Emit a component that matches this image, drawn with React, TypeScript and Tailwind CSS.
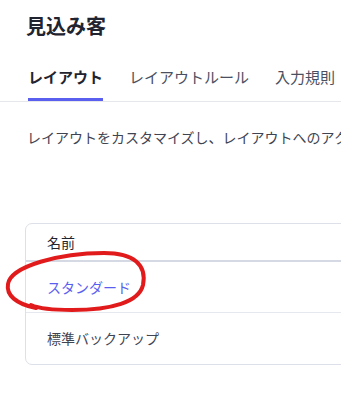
import React from 'react';

const font = { fontFamily: '"Noto Sans CJK JP", "Noto Sans", sans-serif' };

const tabs = ['レイアウト', 'レイアウトルール', '入力規則'];

export default function App() {
  return (
    <div className="relative w-[341px] h-[394px] overflow-hidden bg-white text-gray-800" style={font}>
      <h1 className="pl-[26px] pt-[11px] text-[20px] leading-[30px] font-bold text-[#1f2430]">見込み客</h1>

      <div className="mt-[22px] flex gap-[26px] pl-[28px] border-b border-[#e5e7eb] whitespace-nowrap">
        {tabs.map((t, i) => (
          <div
            key={t}
            className={`pb-[7px] text-[15px] leading-[28px] border-b-[3px] ${
              i === 0 ? 'font-bold text-[#1f2430] border-[#5a5ff0]' : 'text-[#4b5060] border-transparent'
            }`}
          >
            {t}
          </div>
        ))}
      </div>

      <p className="mt-[25px] pl-[27px] text-[14px] leading-[20px] text-[#3f4452] whitespace-nowrap">
        レイアウトをカスタマイズし、レイアウトへのアクセス権を設定します。
      </p>

      <div className="mt-[76px] ml-[25px] w-[420px] rounded-[7px] border border-[#dde0e8] text-[14px]">
        <div className="h-[38px] flex items-center pl-[21px] border-b-2 border-[#d5d9e4] text-[#1f2430]">名前</div>
        <div className="h-[51px] flex items-center pl-[21px] border-b border-[#e6e8ef] text-[#5a5ff0]">スタンダード</div>
        <div className="h-[51px] flex items-center pl-[21px] text-[#3f4452]">標準バックアップ</div>
      </div>

      {/* red hand-drawn annotation */}
      <svg className="absolute left-0 top-0 pointer-events-none" width="341" height="394">
        <path
          d="M 36 308 C 16 304, 6 295, 8 284 C 11 266, 60 253, 104 253 C 134 253, 147 265, 143 285 C 139 302, 112 310, 72 310 C 52 310, 40 309, 31 305"
          fill="none"
          stroke="#e11b1b"
          strokeWidth="4"
          strokeLinecap="round"
        />
      </svg>
    </div>
  );
}
